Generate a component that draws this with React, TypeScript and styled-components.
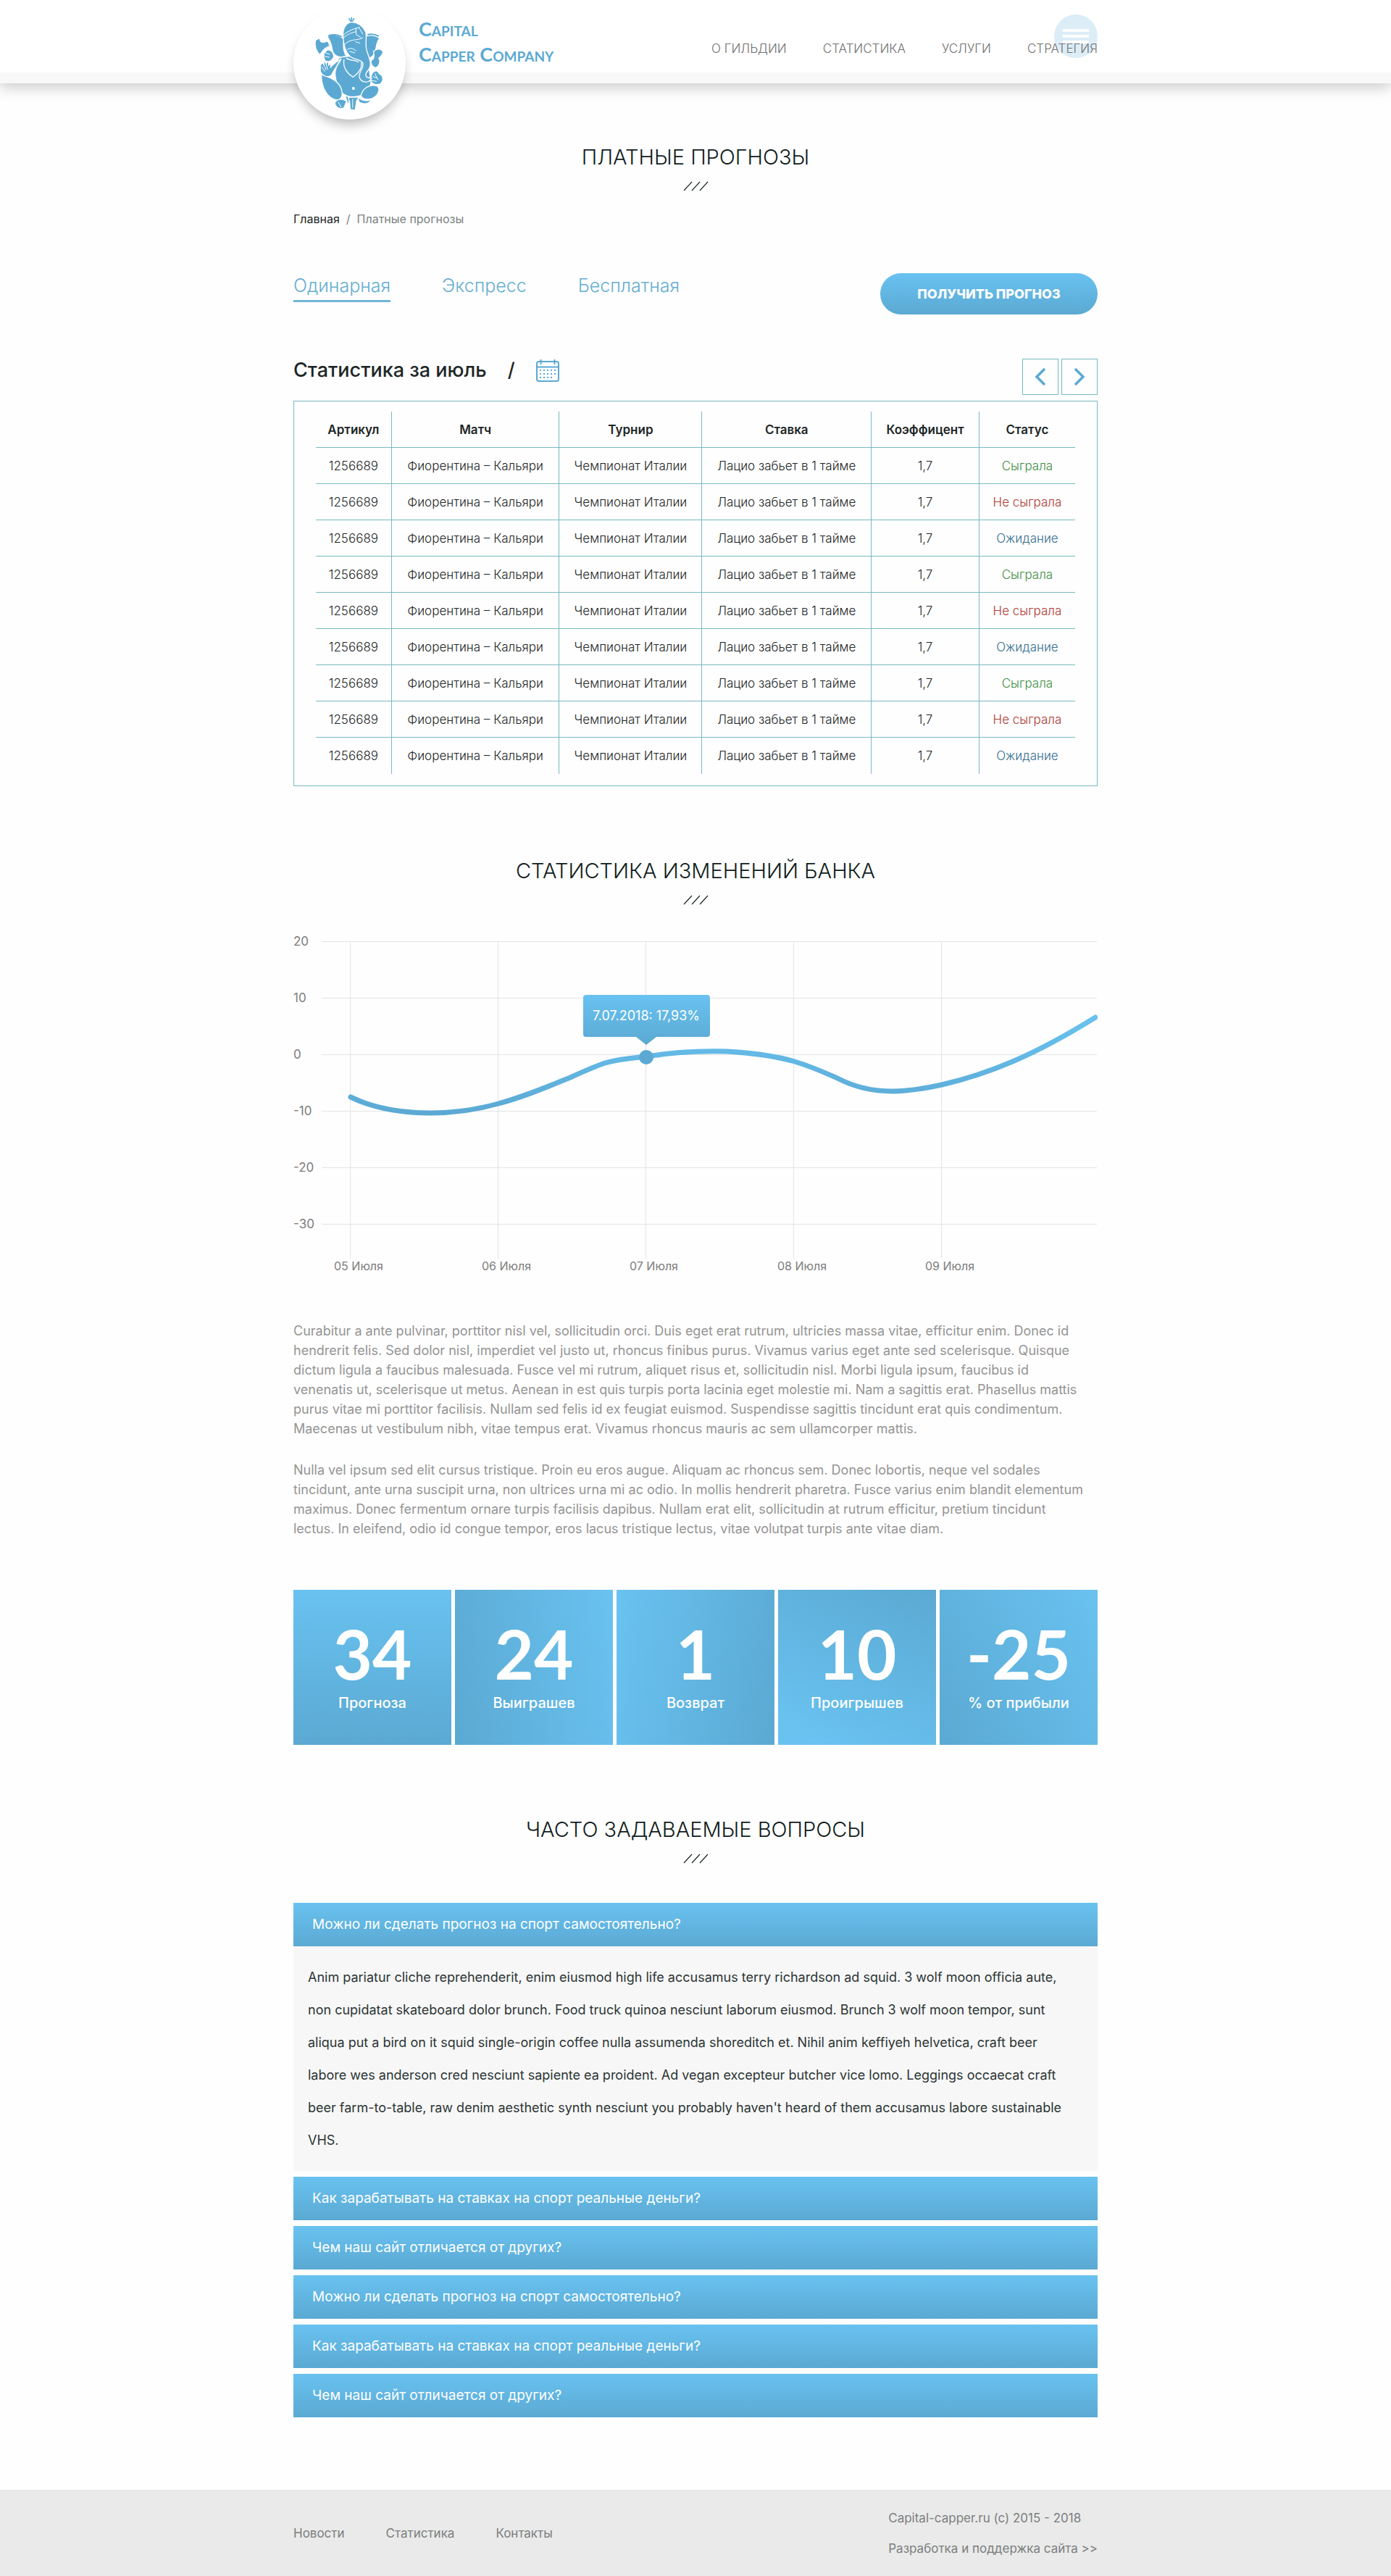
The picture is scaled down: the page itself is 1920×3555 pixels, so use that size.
import React, { useState } from 'react';
import styled, { createGlobalStyle } from 'styled-components';

const sky = '#69c2f0';
const deep = '#5ba9d3';
const line = '#78b9c2';

const GlobalStyle = createGlobalStyle`
  *, *::before, *::after { box-sizing: border-box; }
  body { margin: 0; background: #fefefe; color: #1d2626; font-family: Inter, "Open Sans", sans-serif; font-weight: 300; }
  button { font: inherit; color: inherit; background: none; border: 0; padding: 0; cursor: pointer; }
  a { color: inherit; text-decoration: none; }
  h1, h2, p, dl, dd { margin: 0; font-weight: inherit; }
  svg { display: block; }
`;

const Container = styled.div`
  width: 100%;
  max-width: 1140px;
  margin: 0 auto;
  padding: 0 15px;
`;

/* ---------- header ---------- */

const Header = styled.header`
  height: 115px;
  background: #fff;
  border-bottom: 15px solid #f8f8f8;
  box-shadow: 0 6px 18px rgba(0, 0, 0, 0.2);
`;

const HeaderRow = styled(Container)`
  display: flex;
  justify-content: space-between;
  align-items: flex-start;
`;

const Brand = styled.a`
  display: flex;
  gap: 18px;
  padding-top: 10px;
`;

const LogoDisc = styled.span`
  display: flex;
  align-items: center;
  justify-content: center;
  flex: none;
  width: 155px;
  height: 155px;
  border-radius: 50%;
  background: #fff;
  box-shadow: 0 10px 16px -4px rgba(0, 0, 0, 0.28);
`;

const BrandName = styled.span`
  padding-top: 12px;
  font: 700 27px/35px Lato, sans-serif;
  font-variant: small-caps;
  color: ${deep};
`;

const NavArea = styled.div`
  position: relative;
`;

const Nav = styled.nav`
  position: relative;
  z-index: 1;
  display: flex;
  gap: 50px;
  padding-top: 55px;
  font-size: 17px;
  line-height: 24px;
  color: #707070;
  pointer-events: none;
  a { pointer-events: auto; }
`;

const MenuButton = styled.button`
  position: absolute;
  top: 20px;
  right: 0;
  display: flex;
  flex-direction: column;
  align-items: center;
  justify-content: center;
  gap: 4px;
  width: 60px;
  height: 60px;
  border-radius: 50%;
  background: #dcedf8;
`;

const MenuBar = styled.span`
  width: 36px;
  height: 4px;
  background: rgba(255, 255, 255, 0.9);
`;

/* ---------- headings ---------- */

const TitleBlock = styled.div<{ $above: number }>`
  display: flex;
  flex-direction: column;
  align-items: center;
  gap: 15px;
  margin-top: ${p => p.$above}px;
  text-align: center;
`;

const Title = styled.h2`
  font-size: 29px;
  line-height: 36px;
  color: #101c1c;
  text-transform: uppercase;
`;

const Crumbs = styled.nav`
  display: flex;
  gap: 9px;
  margin-top: 26px;
  font-size: 16px;
  line-height: 24px;
  font-weight: 400;
  color: #7a8282;
`;

const CrumbLink = styled.a`
  color: #1d2626;
`;

/* ---------- tabs ---------- */

const Toolbar = styled.div`
  display: flex;
  justify-content: space-between;
  align-items: flex-start;
  margin-top: 63px;
`;

const Tabs = styled.div`
  display: flex;
  gap: 71px;
`;

const Tab = styled.button<{ $active: boolean }>`
  padding-bottom: 3px;
  border-bottom: 3px solid ${p => (p.$active ? '#74b6d6' : 'transparent')};
  font-size: 25px;
  line-height: 34px;
  color: #66aed0;
`;

const OrderButton = styled.button`
  width: 300px;
  height: 57px;
  border-radius: 29px;
  background: linear-gradient(${sky}, ${deep});
  color: #fff;
  font-size: 18px;
  font-weight: 800;
`;

/* ---------- table ---------- */

const StatsHead = styled.div`
  display: flex;
  justify-content: space-between;
  align-items: flex-start;
  margin: 61px 0 8px;
`;

const StatsTitle = styled.div`
  display: flex;
  gap: 29px;
  font-size: 27px;
  line-height: 32px;
  font-weight: 500;
`;

const StatsName = styled.h2`
  font-size: 27px;
  font-weight: 500;
`;

const Pager = styled.div`
  display: flex;
  gap: 4px;
`;

const PageButton = styled.button`
  display: flex;
  align-items: center;
  justify-content: center;
  width: 50px;
  height: 50px;
  border: 1px solid ${line};
`;

const TableFrame = styled.div`
  padding: 14px 30px 16px;
  border: 1px solid ${line};
`;

const Table = styled.table`
  width: 100%;
  table-layout: fixed;
  border-collapse: separate;
  border-spacing: 0;
  font-size: 17px;
  text-align: center;
`;

const Col = styled.col<{ $share: number }>`
  width: ${p => p.$share}%;
`;

const cellEdges = `
  height: 50px;
  padding: 0;
  border-right: 1px solid ${line};
  border-bottom: 1px solid ${line};
  white-space: nowrap;
  &:last-child { border-right: 0; }
`;

const HeadCell = styled.th`
  ${cellEdges}
  font-weight: 600;
`;

const Cell = styled.td<{ $tone?: string }>`
  ${cellEdges}
  color: ${p => p.$tone || '#1d2626'};
  tr:last-child > & { border-bottom: 0; }
`;

/* ---------- chart ---------- */

const Chart = styled.svg`
  width: 100%;
  height: auto;
  margin-top: 40px;
  font-family: Inter, sans-serif;
  font-weight: 400;
  fill: #7c7c7c;
`;

/* ---------- text ---------- */

const Copy = styled.div`
  display: flex;
  flex-direction: column;
  gap: 30px;
  margin-top: 64px;
  font-size: 18px;
  line-height: 27px;
  font-weight: 400;
  color: #949494;
`;

/* ---------- totals ---------- */

const Totals = styled.dl`
  display: grid;
  grid-template-columns: repeat(5, 1fr);
  gap: 5px;
  margin-top: 71px;
`;

const Total = styled.div<{ $fill: string }>`
  display: flex;
  flex-direction: column-reverse;
  justify-content: flex-end;
  gap: 6px;
  height: 214px;
  padding-top: 40px;
  background: ${p => p.$fill};
  color: #fff;
  text-align: center;
`;

const TotalValue = styled.dd`
  font: 700 94px/96px Lato, sans-serif;
`;

const TotalLabel = styled.dt`
  font-size: 20px;
  line-height: 28px;
  font-weight: 500;
`;

/* ---------- questions ---------- */

const Accordion = styled.div`
  display: flex;
  flex-direction: column;
  gap: 8px;
  margin-top: 54px;
`;

const Question = styled.button`
  display: block;
  width: 100%;
  height: 60px;
  padding: 0 26px 2px;
  background: linear-gradient(${sky}, ${deep});
  color: #fff;
  font-size: 19px;
  font-weight: 400;
  text-align: left;
`;

const Answer = styled.p`
  padding: 20px;
  background: #f7f7f7;
  color: #2c3535;
  font-size: 18px;
  font-weight: 400;
  line-height: 45px;
`;

/* ---------- footer ---------- */

const Footer = styled.footer`
  margin-top: 100px;
  background: #eaeaea;
  color: #7a7e7e;
  font-size: 17px;
  font-weight: 400;
`;

const FooterRow = styled(Container)`
  display: flex;
  justify-content: space-between;
  align-items: center;
  min-height: 119px;
`;

const FooterLinks = styled.nav`
  display: flex;
  gap: 57px;
`;

const FooterNote = styled.div`
  display: flex;
  flex-direction: column;
  line-height: 42px;
`;

/* ---------- drawings ---------- */

const Ganesha = () => (
  <svg width="97" height="130" viewBox="130 60 290 390" fill={deep} stroke="#fff" strokeWidth="4" strokeLinejoin="round" strokeLinecap="round" aria-hidden="true">
    <path d="M273 68 L283 86 L293 68 M283 64 V92" stroke={deep} strokeWidth="5" fill="none" />
    <path d="M182 142 C205 130 232 138 252 152 C246 182 250 205 262 226 C240 232 218 226 208 210 C198 190 206 172 182 142Z" />
    <path d="M340 142 C362 134 384 138 400 150 C384 166 388 186 380 208 C374 224 362 232 348 234 C334 208 336 176 340 142Z" />
    <path d="M190 138 C210 132 228 136 240 142 M352 134 C368 130 382 134 394 140" stroke={deep} strokeWidth="6" fill="none" />
    <path d="M134 158 C150 146 152 148 154 160 C158 168 170 168 184 160 L194 182 C176 186 166 196 152 218 C134 200 130 180 134 158Z" />
    <path d="M178 202 C190 190 208 204 210 226 C204 242 190 250 176 244 C164 232 166 212 178 202Z" />
    <path d="M176 210 L192 216 M172 224 L190 228" strokeWidth="3" />
    <path d="M374 204 C388 190 406 192 414 206 C410 220 404 226 396 232 C404 244 400 264 384 272 C370 270 362 256 364 242 C374 238 380 228 374 204Z" />
    <path d="M366 300 C376 280 392 280 398 296 C414 304 418 322 404 338 C386 346 366 338 362 322Z" />
    <path d="M372 308 L388 314 M380 296 L392 320 M366 324 L386 328" strokeWidth="3" />
    <path d="M230 232 C252 220 322 220 344 236 C362 262 356 302 364 330 C358 372 334 392 286 392 C246 390 226 364 218 318 C212 288 214 256 230 232Z" />
    <path d="M158 300 C184 308 226 320 240 356 C250 384 242 408 218 404 C182 396 158 352 158 300Z" />
    <path d="M322 386 C330 356 356 340 386 346 C404 354 398 384 370 398 C350 406 328 402 322 386Z" />
    <path d="M154 262 C160 248 166 250 168 260 C170 240 176 240 178 258 C182 240 190 244 188 262 C194 250 200 256 196 270 C210 252 226 244 240 236 C226 262 208 282 200 302 C184 316 160 304 154 286Z" />
    <path d="M160 268 L172 286 M170 262 L178 280 M180 262 L184 278" strokeWidth="3" />
    <path d="M248 140 C246 104 264 84 284 82 C312 84 332 102 342 124 C348 150 338 170 346 200 C356 232 372 258 352 282 C334 302 342 316 366 314 C358 338 324 334 316 312 C310 288 336 276 330 252 C322 236 300 240 282 228 C258 210 250 176 248 140Z" />
    <path d="M250 136 C270 116 296 110 316 104 M250 148 C266 132 284 126 302 122 M302 108 V134 L322 146 M314 106 L330 132 M256 174 C278 150 306 160 330 148 M300 164 L318 170" fill="none" strokeWidth="3" />
    <path d="M266 196 C276 188 290 190 302 202 M276 204 L296 210" fill="none" strokeWidth="3" />
    <path d="M252 238 C246 270 266 296 290 310 C312 294 328 276 324 250 M262 232 C280 244 300 238 312 248 M236 240 C222 264 214 280 214 304" fill="none" />
    <circle cx="291" cy="357" r="6" fill="#fff" stroke="none" />
    <path d="M216 414 C228 398 246 400 262 410 L252 436 C238 446 222 436 216 424Z M270 394 L314 394 L304 406 L298 446 L278 444 L276 414Z M312 396 C326 408 344 412 364 404 C352 424 330 424 314 412Z M258 388 L272 392 L272 430Z" strokeWidth="3" />
    <path d="M288 402 V436 M228 414 L240 434 M310 428 L318 432" strokeWidth="3" />
  </svg>
);

const Slashes = () => (
  <svg width="35" height="14" viewBox="0 0 35 14" stroke="#1d2626" strokeWidth="1.2" aria-hidden="true">
    <path d="M1 13 L12 1 M12 13 L23 1 M23 13 L34 1" />
  </svg>
);

const Chevron = ({ flip }: { flip?: boolean }) => (
  <svg width="16" height="26" viewBox="0 0 16 26" fill="none" stroke={deep} strokeWidth="3.5" aria-hidden="true">
    <path d={flip ? 'M2 2 L13 13 L2 24' : 'M14 2 L3 13 L14 24'} />
  </svg>
);

const CalendarIcon = () => (
  <svg width="32" height="32" viewBox="0 0 32 32" fill="none" stroke={deep} strokeWidth="2" aria-hidden="true">
    <rect x="1" y="4" width="30" height="27" rx="3" />
    <path d="M1 11.5 H31" />
    <path d="M6.5 1 V8 M25.5 1 V8" />
    {[16, 21, 26].map(y => (
      <path key={y} d={`M5 ${y} H${y === 26 ? 23 : 28}`} strokeDasharray="2 3" strokeWidth="2" />
    ))}
  </svg>
);

/* ---------- data ---------- */

const menu = ['О ГИЛЬДИИ', 'СТАТИСТИКА', 'УСЛУГИ', 'СТРАТЕГИЯ'];
const tabs = ['Одинарная', 'Экспресс', 'Бесплатная'];
const columns: [string, number][] = [
  ['Артикул', 10], ['Матч', 22.1], ['Турнир', 18.8], ['Ставка', 22.3], ['Коэффицент', 14.2], ['Статус', 12.6],
];
const statuses = [
  { label: 'Сыграла', tone: '#3f8f42' },
  { label: 'Не сыграла', tone: '#b03a34' },
  { label: 'Ожидание', tone: '#356f90' },
];
const bets = Array.from({ length: 9 }, (_, i) => ({
  values: ['1256689', 'Фиорентина – Кальяри', 'Чемпионат Италии', 'Лацио забьет в 1 тайме', '1,7'],
  status: statuses[i % 3],
}));
const levels = [20, 10, 0, -10, -20, -30];
const days = ['05 Июля', '06 Июля', '07 Июля', '08 Июля', '09 Июля'];

const copy = [
  [
    'Curabitur a ante pulvinar, porttitor nisl vel, sollicitudin orci. Duis eget erat rutrum, ultricies massa vitae, efficitur enim. Donec id',
    'hendrerit felis. Sed dolor nisl, imperdiet vel justo ut, rhoncus finibus purus. Vivamus varius eget ante sed scelerisque. Quisque',
    'dictum ligula a faucibus malesuada. Fusce vel mi rutrum, aliquet risus et, sollicitudin nisl. Morbi ligula ipsum, faucibus id',
    'venenatis ut, scelerisque ut metus. Aenean in est quis turpis porta lacinia eget molestie mi. Nam a sagittis erat. Phasellus mattis',
    'purus vitae mi porttitor facilisis. Nullam sed felis id ex feugiat euismod. Suspendisse sagittis tincidunt erat quis condimentum.',
    'Maecenas ut vestibulum nibh, vitae tempus erat. Vivamus rhoncus mauris ac sem ullamcorper mattis.',
  ],
  [
    'Nulla vel ipsum sed elit cursus tristique. Proin eu eros augue. Aliquam ac rhoncus sem. Donec lobortis, neque vel sodales',
    'tincidunt, ante urna suscipit urna, non ultrices urna mi ac odio. In mollis hendrerit pharetra. Fusce varius enim blandit elementum',
    'maximus. Donec fermentum ornare turpis facilisis dapibus. Nullam erat elit, sollicitudin at rutrum efficitur, pretium tincidunt',
    'lectus. In eleifend, odio id congue tempor, eros lacus tristique lectus, vitae volutpat turpis ante vitae diam.',
  ],
];

const totals = [
  { value: '34', label: 'Прогноза', fill: `linear-gradient(180deg, ${sky}, ${deep})` },
  { value: '24', label: 'Выиграшев', fill: `linear-gradient(80deg, ${deep}, ${sky})` },
  { value: '1', label: 'Возврат', fill: `linear-gradient(100deg, ${sky}, ${deep})` },
  { value: '10', label: 'Проигрышев', fill: `linear-gradient(25deg, ${sky} 10%, ${deep})` },
  { value: '-25', label: '% от прибыли', fill: `linear-gradient(60deg, ${deep}, ${sky})` },
];

const questions = [
  'Можно ли сделать прогноз на спорт самостоятельно?',
  'Как зарабатывать на ставках на спорт реальные деньги?',
  'Чем наш сайт отличается от других?',
  'Можно ли сделать прогноз на спорт самостоятельно?',
  'Как зарабатывать на ставках на спорт реальные деньги?',
  'Чем наш сайт отличается от других?',
];
const answer = [
  'Anim pariatur cliche reprehenderit, enim eiusmod high life accusamus terry richardson ad squid. 3 wolf moon officia aute,',
  'non cupidatat skateboard dolor brunch. Food truck quinoa nesciunt laborum eiusmod. Brunch 3 wolf moon tempor, sunt',
  'aliqua put a bird on it squid single-origin coffee nulla assumenda shoreditch et. Nihil anim keffiyeh helvetica, craft beer',
  'labore wes anderson cred nesciunt sapiente ea proident. Ad vegan excepteur butcher vice lomo. Leggings occaecat craft',
  "beer farm-to-table, raw denim aesthetic synth nesciunt you probably haven't heard of them accusamus labore sustainable",
  'VHS.',
];

const Lines = ({ of }: { of: string[] }) => (
  <>
    {of.map((text, i) => (
      <React.Fragment key={i}>
        {i > 0 && <br />}
        {text}
      </React.Fragment>
    ))}
  </>
);

const Heading = ({ above, children }: { above: number; children: React.ReactNode }) => (
  <TitleBlock $above={above}>
    <Title>{children}</Title>
    <Slashes />
  </TitleBlock>
);

const BankChart = () => (
  <Chart viewBox="0 0 1110 470" role="img" aria-label="Статистика изменений банка">
    <defs>
      <linearGradient id="curve" gradientUnits="userSpaceOnUse" x1="0" y1="250" x2="0" y2="115">
        <stop offset="0" stopColor={deep} />
        <stop offset="1" stopColor={sky} />
      </linearGradient>
      <linearGradient id="tip" x1="0" y1="0" x2="0" y2="1">
        <stop offset="0" stopColor={sky} />
        <stop offset="1" stopColor={deep} />
      </linearGradient>
    </defs>
    {levels.map((level, i) => (
      <g key={level}>
        <path d={`M39 ${10.5 + i * 78} H1109`} stroke="#e4e4e4" />
        <text x="0" y={16 + i * 78} fontSize="17">{level}</text>
      </g>
    ))}
    {days.map((day, i) => (
      <g key={day}>
        <path d={`M${78.5 + i * 204} 10 V448`} stroke="#e4e4e4" />
        <text x={56 + i * 204} y="464" fontSize="16">{day}</text>
      </g>
    ))}
    <path
      d="M79 225 C112 241 148 247 189 247 C225 247 255 242 283 234 C320 224 350 211 382 198 C402 189 415 183 430 178 C450 172 468 171 487 169 C525 163 560 161 598 162 C632 164 664 168 692 176 C718 184 735 192 751 199 C772 210 795 217 827 217 C850 217 872 213 895 208 C930 200 960 190 995 175 C1034 158 1070 138 1107 115"
      fill="none"
      stroke="url(#curve)"
      strokeWidth="7"
      strokeLinecap="round"
    />
    <circle cx="487" cy="170" r="10" fill={deep} />
    <path d="M404 84 H571 Q575 84 575 88 V138 Q575 142 571 142 H501 L487 153 L473 142 H404 Q400 142 400 138 V88 Q400 84 404 84Z" fill="url(#tip)" />
    <text x="487" y="119" fontSize="18" textAnchor="middle" fill="#fff">7.07.2018: 17,93%</text>
  </Chart>
);

export default function App() {
  const [tab, setTab] = useState(0);
  const [open, setOpen] = useState(0);

  return (
    <>
      <GlobalStyle />
      <Header>
        <HeaderRow>
          <Brand href="#">
            <LogoDisc><Ganesha /></LogoDisc>
            <BrandName>Capital<br />Capper Company</BrandName>
          </Brand>
          <NavArea>
            <Nav>{menu.map(item => <a href="#" key={item}>{item}</a>)}</Nav>
            <MenuButton aria-label="Меню"><MenuBar /><MenuBar /><MenuBar /></MenuButton>
          </NavArea>
        </HeaderRow>
      </Header>

      <Container as="main">
        <Heading above={84}>Платные прогнозы</Heading>
        <Crumbs>
          <CrumbLink href="#">Главная</CrumbLink>
          <span>/</span>
          <span>Платные прогнозы</span>
        </Crumbs>

        <Toolbar>
          <Tabs role="tablist">
            {tabs.map((name, i) => (
              <Tab key={name} role="tab" aria-selected={i === tab} $active={i === tab} onClick={() => setTab(i)}>{name}</Tab>
            ))}
          </Tabs>
          <OrderButton>ПОЛУЧИТЬ ПРОГНОЗ</OrderButton>
        </Toolbar>

        <StatsHead>
          <StatsTitle>
            <StatsName>Статистика за июль</StatsName>
            <span>/</span>
            <button aria-label="Календарь"><CalendarIcon /></button>
          </StatsTitle>
          <Pager>
            <PageButton aria-label="Назад"><Chevron /></PageButton>
            <PageButton aria-label="Вперед"><Chevron flip /></PageButton>
          </Pager>
        </StatsHead>
        <TableFrame>
          <Table>
            <colgroup>{columns.map(([name, share]) => <Col key={name} $share={share} />)}</colgroup>
            <thead>
              <tr>{columns.map(([name]) => <HeadCell key={name} scope="col">{name}</HeadCell>)}</tr>
            </thead>
            <tbody>
              {bets.map((bet, i) => (
                <tr key={i}>
                  {bet.values.map(value => <Cell key={value}>{value}</Cell>)}
                  <Cell $tone={bet.status.tone}>{bet.status.label}</Cell>
                </tr>
              ))}
            </tbody>
          </Table>
        </TableFrame>

        <Heading above={99}>Статистика изменений банка</Heading>
        <BankChart />

        <Copy>{copy.map((lines, i) => <p key={i}><Lines of={lines} /></p>)}</Copy>

        <Totals>
          {totals.map(total => (
            <Total key={total.label} $fill={total.fill}>
              <TotalLabel>{total.label}</TotalLabel>
              <TotalValue>{total.value}</TotalValue>
            </Total>
          ))}
        </Totals>

        <Heading above={99}>Часто задаваемые вопросы</Heading>
        <Accordion>
          {questions.map((question, i) => (
            <div key={i}>
              <Question aria-expanded={i === open} onClick={() => setOpen(i === open ? -1 : i)}>{question}</Question>
              {i === open && <Answer><Lines of={answer} /></Answer>}
            </div>
          ))}
        </Accordion>
      </Container>

      <Footer>
        <FooterRow>
          <FooterLinks>
            <a href="#">Новости</a>
            <a href="#">Статистика</a>
            <a href="#">Контакты</a>
          </FooterLinks>
          <FooterNote>
            <span>Capital-capper.ru (c) 2015 - 2018</span>
            <a href="#">Разработка и поддержка сайта &gt;&gt;</a>
          </FooterNote>
        </FooterRow>
      </Footer>
    </>
  );
}
